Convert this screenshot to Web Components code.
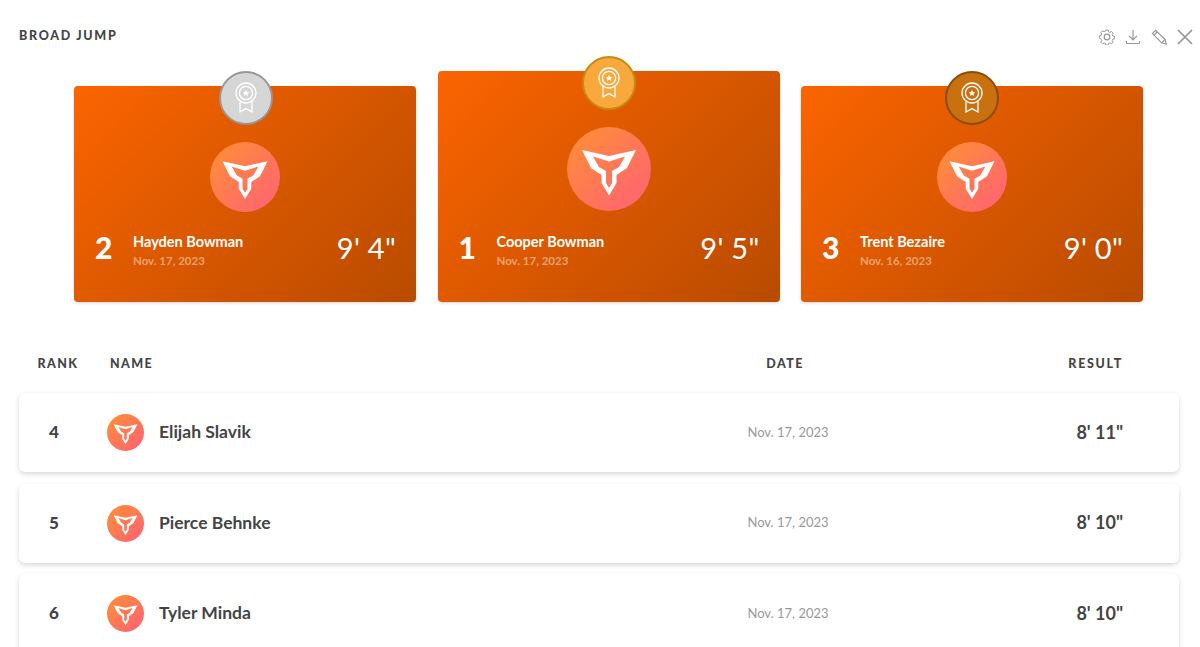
<!DOCTYPE html>
<html>
<head>
<meta charset="utf-8">
<style>
  html, body { margin: 0; height: 647px; overflow: hidden; background: #fff; }
  body { font-family: Lato, "Open Sans", sans-serif; color: #444; }
</style>
</head>
<body>
<leaderboard-view></leaderboard-view>

<template id="brand-logo">
  <style>
    :host { display: block; border-radius: 50%; background: linear-gradient(135deg, #ff8c3a 10%, #ff6570 90%); }
    svg { display: block; width: 100%; height: 100%; }
  </style>
  <svg viewBox="0 0 84 84">
    <path fill="#fff" fill-rule="evenodd" d="M15 23 42 29 69 23 60 41 49.5 48 49.5 56 42 68.5 34.5 56 34.5 48 24 41ZM26 29.5 32 40 39 44 39 56 42 61 45 56 45 44 52 40 58 29.5 42 34.5Z"/>
  </svg>
</template>

<template id="medal-badge">
  <style>
    :host { display: block; width: 54px; height: 54px; box-sizing: border-box; border-radius: 50%; border: 2px solid var(--ring); background: var(--fill); }
    svg { display: block; width: 100%; height: 100%; }
  </style>
  <svg viewBox="0 0 50 50" fill="none" stroke="#fff" stroke-width="1.3">
    <circle cx="25" cy="20" r="10"/>
    <circle cx="25" cy="20" r="6.6"/>
    <path fill="#fff" stroke="none" d="M25 16.8l1 2.2 2.3.2-1.8 1.5.6 2.3-2.1-1.2-2.1 1.2.6-2.3-1.8-1.5 2.3-.2Z"/>
    <path d="M19 28.5V39l6-3.4 6 3.4V28.5"/>
  </svg>
</template>

<template id="tool-bar">
  <style>
    :host { display: flex; align-items: center; gap: 10px; align-self: flex-start; }
    svg { display: block; fill: none; stroke: #969696; stroke-width: 1.2; }
  </style>
  <svg width="16" height="16" viewBox="0 0 16 16">
    <circle cx="8" cy="8" r="2.8"/>
    <path d="M6.8 1h2.4l.4 1.8 1.3.6 1.6-1 1.7 1.7-1 1.6.6 1.3 1.8.4v2.4l-1.8.4-.6 1.3 1 1.6-1.7 1.7-1.6-1-1.3.6-.4 1.8H6.8l-.4-1.8-1.3-.6-1.6 1-1.7-1.7 1-1.6-.6-1.3L.4 9.2V6.8l1.8-.4.6-1.3-1-1.6 1.7-1.7 1.6 1 1.3-.6Z" stroke-width="1"/>
  </svg>
  <svg width="16" height="16" viewBox="0 0 16 16">
    <path d="M8 1v9.5M4 6.8l4 4 4-4M1.5 14.5h13M1.5 12v2.5M14.5 12v2.5"/>
  </svg>
  <svg width="16" height="16" viewBox="0 0 16 16">
    <path d="M1.4 4.6 4.6 1.4l9.4 9 1.2 4.8-4.6-1.4ZM3 6.2 6.2 3M10.6 13.8 14 10.4"/>
  </svg>
  <svg width="16" height="16" viewBox="0 0 16 16" style="stroke-width:1.7">
    <path d="M1 1l14 14M15 1 1 15"/>
  </svg>
</template>

<template id="podium-card">
  <style>
    :host { display: block; position: relative; width: 342px; box-sizing: border-box; height: var(--h, 216px); border-radius: 4px; color: #fff;
      background: linear-gradient(135deg, #fb6400 0%, #b84b00 100%); box-shadow: 0 1px 3px rgba(0,0,0,.18); }
    medal-badge { position: absolute; left: 50%; top: -15px; margin-left: var(--badge-x, -26px); }
    .body { display: flex; flex-direction: column; height: 100%; box-sizing: border-box; padding-top: var(--logo-top, 56px); }
    brand-logo { width: var(--logo, 70px); height: var(--logo, 70px); align-self: center; }
    .info { display: flex; align-items: center; padding: 0 20px 0 21px; margin-top: var(--info-gap, 12px); }
    .rank { font-size: 30px; font-weight: 900; width: 38px; line-height: 1; }
    .who { flex: 1; min-width: 0; margin-top: 8px; }
    .name { font-size: 14.5px; font-weight: 700; line-height: 19px; }
    .date { font-size: 11.5px; font-weight: 700; line-height: 19px; color: rgba(255,255,255,.45); }
    .result { font-size: 29px; line-height: 1; font-weight: 400; letter-spacing: .3px; }
  </style>
  <medal-badge></medal-badge>
  <div class="body">
    <brand-logo></brand-logo>
    <div class="info">
      <div class="rank"></div>
      <div class="who"><div class="name"></div><div class="date"></div></div>
      <div class="result"></div>
    </div>
  </div>
</template>

<template id="rank-row">
  <style>
    :host { display: grid; grid-template-columns: 70px 1fr 240px 271px; align-items: center; height: 79px; margin-bottom: 11.5px;
      background: #fff; border-radius: 6px; box-shadow: 0 2px 5px rgba(0,0,0,.16); color: #444; }
    .rank { text-align: center; font-size: 17px; font-weight: 900; padding-bottom: 2px; }
    .who { display: flex; align-items: center; gap: 15px; padding-left: 18px; font-size: 17.5px; font-weight: 700; }
    .name { padding-bottom: 2px; }
    brand-logo { width: 37px; height: 37px; flex: none; }
    .date { text-align: center; font-size: 13px; color: #999; padding-bottom: 2px; }
    .result { text-align: right; padding: 0 56px 2px 0; font-size: 18px; font-weight: 700; }
  </style>
  <div class="rank"></div>
  <div class="who"><brand-logo></brand-logo><span class="name"></span></div>
  <div class="date"></div>
  <div class="result"></div>
</template>

<template id="leaderboard-view">
  <style>
    :host { display: block; padding: 0 21px 0 19px; }
    header { display: flex; justify-content: space-between; height: 71px; padding-top: 28px; box-sizing: border-box; }
    h1 { margin: 0; font-size: 12.5px; line-height: 15px; font-weight: 900; letter-spacing: 1.7px; color: #444; }
    tool-bar { margin-top: 1px; margin-right: -14px; }
    .podium { display: flex; align-items: flex-end; justify-content: center; gap: 21.5px; padding-left: 19px; }
    .thead { display: grid; grid-template-columns: 70px 1fr 240px 271px; align-items: center; height: 91px; font-size: 12.5px; font-weight: 900; letter-spacing: 1.4px; color: #444; }
    .thead > div { padding-top: 31px; box-sizing: border-box; }
    .thead .k { text-align: center; padding-left: 8px; }
    .thead .n { padding-left: 21px; }
    .thead .d { text-align: center; padding-right: 6px; }
    .thead .r { text-align: right; padding-right: 56px; letter-spacing: 1.7px; }
  </style>
  <header>
    <h1>BROAD JUMP</h1>
    <tool-bar></tool-bar>
  </header>
  <section class="podium">
    <podium-card rank="2" name="Hayden Bowman" date="Nov. 17, 2023" result="9' 4&quot;" medal="silver"></podium-card>
    <podium-card rank="1" name="Cooper Bowman" date="Nov. 17, 2023" result="9' 5&quot;" medal="gold" first></podium-card>
    <podium-card rank="3" name="Trent Bezaire" date="Nov. 16, 2023" result="9' 0&quot;" medal="bronze"></podium-card>
  </section>
  <div class="thead">
    <div class="k">RANK</div>
    <div class="n">NAME</div>
    <div class="d">DATE</div>
    <div class="r">RESULT</div>
  </div>
  <rank-row rank="4" name="Elijah Slavik" date="Nov. 17, 2023" result="8' 11&quot;"></rank-row>
  <rank-row rank="5" name="Pierce Behnke" date="Nov. 17, 2023" result="8' 10&quot;"></rank-row>
  <rank-row rank="6" name="Tyler Minda" date="Nov. 17, 2023" result="8' 10&quot;"></rank-row>
</template>

<script>
  (function () {
    const medals = {
      silver: ['#d6d6d6', '#969696'],
      gold: ['#f9a83c', '#c48a14'],
      bronze: ['#c9700f', '#8a4c08'],
    };

    function stamp(host, id) {
      const root = host.attachShadow({ mode: 'open' });
      root.appendChild(document.getElementById(id).content.cloneNode(true));
      return root;
    }

    class Plain extends HTMLElement {
      connectedCallback() {
        if (!this.shadowRoot) stamp(this, this.localName);
      }
    }
    customElements.define('brand-logo', class extends Plain {});
    customElements.define('medal-badge', class extends Plain {});
    customElements.define('tool-bar', class extends Plain {});
    customElements.define('leaderboard-view', class extends Plain {});

    class PodiumCard extends HTMLElement {
      connectedCallback() {
        const root = stamp(this, 'podium-card');
        for (const k of ['rank', 'name', 'date', 'result']) {
          root.querySelector('.' + k).textContent = this.getAttribute(k);
        }
        const [fill, ring] = medals[this.getAttribute('medal')];
        this.style.setProperty('--fill', fill);
        this.style.setProperty('--ring', ring);
        if (this.getAttribute('medal') === 'bronze') this.style.setProperty('--badge-x', '-27px');
        if (this.hasAttribute('first')) {
          this.style.setProperty('--h', '231px');
          this.style.setProperty('--logo', '84px');
          this.style.setProperty('--info-gap', '13px');
          this.style.setProperty('--badge-x', '-27px');
        }
      }
    }
    customElements.define('podium-card', PodiumCard);

    class RankRow extends HTMLElement {
      connectedCallback() {
        const root = stamp(this, 'rank-row');
        for (const k of ['rank', 'name', 'date', 'result']) {
          root.querySelector('.' + k).textContent = this.getAttribute(k);
        }
      }
    }
    customElements.define('rank-row', RankRow);
  })();
</script>
</body>
</html>
